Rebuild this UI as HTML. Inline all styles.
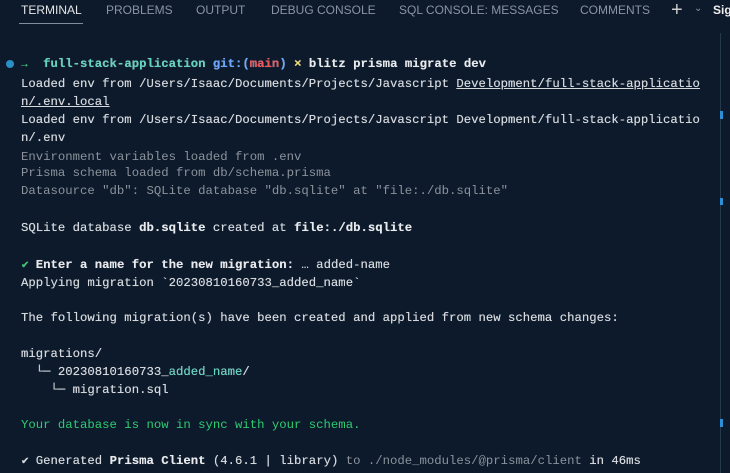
<!DOCTYPE html>
<html><head><meta charset="utf-8"><style>
body{margin:0;width:730px;height:473px;background:#0c1a2b;overflow:hidden;position:relative;font-family:"Liberation Mono",monospace;}
.tabs{position:absolute;top:0;left:0;width:730px;height:28px;font-family:"Liberation Sans",sans-serif;font-size:12px;color:#8a94a3;}
.tabs span{position:absolute;top:3px;}
.ul{position:absolute;left:19px;top:23px;width:64px;height:1px;background:#7f8ea3;}
.l{position:absolute;left:21px;height:18px;line-height:18px;font-size:12.3px;color:#d6d9de;white-space:pre;text-shadow:0 0 0.4px #d6d9de;}
.g{color:#8c939c;text-shadow:none}
.b{font-weight:bold;color:#e8eaed}
.u{text-decoration:underline}
.c{color:#5fd3bc}
.grn{color:#2ecc71}
.ck{display:inline-block;width:7.38px;font-size:10px;text-align:left}
.sb{position:absolute;left:720px;width:3px;background:#2f8fd6;}
</style></head><body>
<div class="tabs">
<span style="left:21px;color:#e6e6e6">TERMINAL</span>
<span style="left:106px">PROBLEMS</span>
<span style="left:196px">OUTPUT</span>
<span style="left:271px">DEBUG CONSOLE</span>
<span style="left:399px">SQL CONSOLE: MESSAGES</span>
<span style="left:580px">COMMENTS</span>
<span style="left:671px;top:-1px;font-size:20px;color:#ccc">+</span>
<span style="left:694px;top:3px;font-size:10px;">&#8964;</span>
<span style="left:713px;color:#eee;font-weight:bold">Sig</span>
</div>
<div class="ul"></div>
<div style="position:absolute;left:6px;top:60px;width:8px;height:8px;border-radius:50%;background:#2a8fc5"></div>
<div class="sb" style="top:33px;height:440px;width:1px;background:#25384c"></div>
<div class="sb" style="top:111px;height:8px"></div>
<div class="sb" style="top:198px;height:7px"></div>
<div class="sb" style="top:419px;height:8px"></div>
<div class="l" style="top:55px"><span class="ck" style="color:#2ecc71;font-size:11px">→</span>  <span class="b" style="color:#5fd3bc">full-stack-application</span> <span class="b" style="color:#6aa5ff">git:(</span><span class="b" style="color:#f0535a">main</span><span class="b" style="color:#6aa5ff">)</span> <span class="b" style="color:#f5d76e">×</span> <span class="b">blitz prisma migrate dev</span></div>
<div class="l" style="top:75px">Loaded env from /Users/Isaac/Documents/Projects/Javascript <span class="u">Development/full-stack-applicatio</span></div>
<div class="l" style="top:93px"><span class="u">n/.env.local</span></div>
<div class="l" style="top:111px">Loaded env from /Users/Isaac/Documents/Projects/Javascript Development/full-stack-applicatio</div>
<div class="l" style="top:129px">n/.env</div>
<div class="l g" style="top:148px">Environment variables loaded from .env</div>
<div class="l g" style="top:164px">Prisma schema loaded from db/schema.prisma</div>
<div class="l g" style="top:182px">Datasource "db": SQLite database "db.sqlite" at "file:./db.sqlite"</div>
<div class="l" style="top:219px">SQLite database <span class="b">db.sqlite</span> created at <span class="b">file:./db.sqlite</span></div>
<div class="l" style="top:256px"><span class="ck grn">✔</span> <span class="b">Enter a name for the new migration:</span> … added-name</div>
<div class="l" style="top:274px">Applying migration `20230810160733_added_name`</div>
<div class="l" style="top:309px">The following migration(s) have been created and applied from new schema changes:</div>
<div class="l" style="top:345px">migrations/</div>
<div class="l" style="top:363px">  └─ 20230810160733_<span class="c">added_name</span>/</div>
<div class="l" style="top:381px">    └─ migration.sql</div>
<div class="l grn" style="top:416px;text-shadow:none">Your database is now in sync with your schema.</div>
<div class="l" style="top:452px"><span class="ck">✔</span> Generated <span class="b">Prisma Client</span> (4.6.1 | library) <span class="g">to ./node_modules/@prisma/client</span> in 46ms</div>
</body></html>
